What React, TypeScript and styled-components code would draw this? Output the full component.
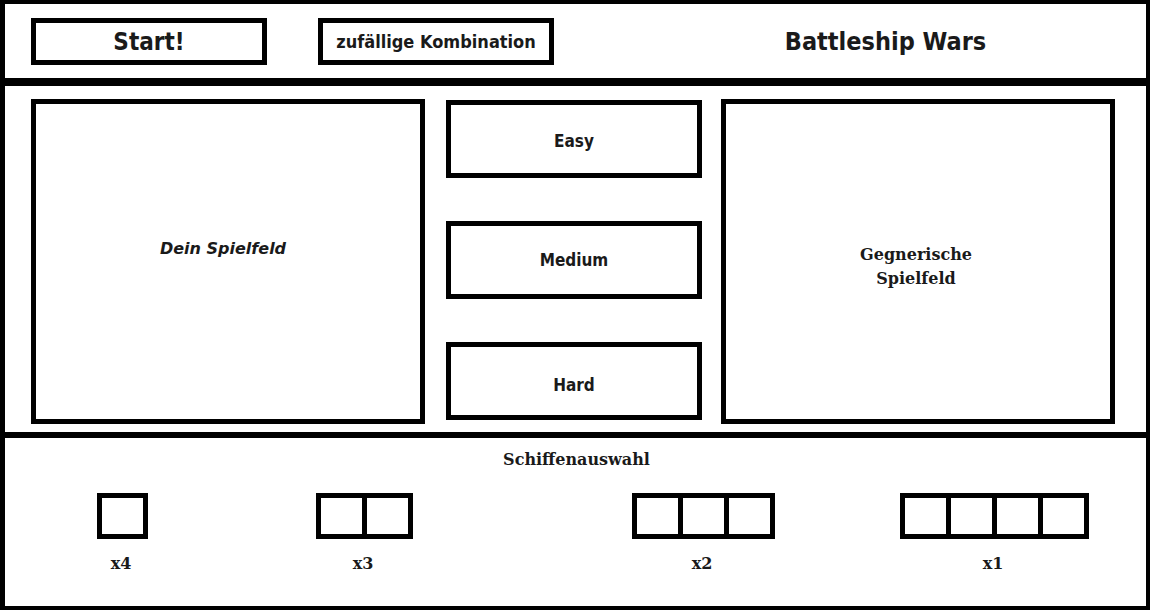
import React from "react";
import styled, { createGlobalStyle } from "styled-components";

const GlobalStyle = createGlobalStyle`
  html, body {
    margin: 0;
    padding: 0;
    background: #fff;
  }
  body {
    font-family: "DejaVu Serif", "Liberation Serif", serif;
    color: #1a1a1a;
  }
`;

const Frame = styled.div`
  width: 1150px;
  height: 610px;
  box-sizing: border-box;
  border: 4px solid #000;
  border-left-width: 5px;
  display: flex;
  flex-direction: column;
`;

const Header = styled.header`
  height: 82px;
  box-sizing: border-box;
  border-bottom: 8px solid #000;
  padding: 14px 0 13px 26px;
  display: flex;
  align-items: stretch;
  gap: 51px;
`;

const HeadButton = styled.button<{ $size: number }>`
  all: unset;
  box-sizing: border-box;
  width: 236px;
  height: 47px;
  border: 5px solid #000;
  display: flex;
  align-items: center;
  justify-content: center;
  font-family: "DejaVu Sans Condensed", "Liberation Sans", sans-serif;
  font-weight: 700;
  font-size: ${(p) => p.$size}px;
  color: #1a1a1a;
  cursor: pointer;
`;

const Title = styled.h1`
  flex: 1;
  margin: 0;
  padding-left: 20px;
  display: flex;
  align-items: center;
  justify-content: center;
  font-family: "DejaVu Sans Condensed", "Liberation Sans", sans-serif;
  font-weight: 700;
  font-size: 25px;
  color: #1a1a1a;
`;

const Main = styled.main`
  height: 346px;
  box-sizing: border-box;
  padding: 13px 31px 8px 26px;
  display: flex;
  gap: 21px;
`;

const Board = styled.div<{ $width: number }>`
  width: ${(p) => p.$width}px;
  height: 325px;
  box-sizing: border-box;
  border: 5px solid #000;
  display: flex;
  align-items: center;
  justify-content: center;
  text-align: center;
`;

const OwnLabel = styled.span`
  font-family: "DejaVu Sans", "Liberation Sans", sans-serif;
  font-style: italic;
  font-weight: 700;
  font-size: 16px;
  margin-top: -26px;
  margin-right: 10px;
`;

const EnemyLabel = styled.span`
  font-family: "DejaVu Serif", "Liberation Serif", serif;
  font-weight: 700;
  font-size: 16px;
  line-height: 24px;
  margin-top: 10px;
  margin-right: 4px;
`;

const Levels = styled.div`
  width: 256px;
  height: 320px;
  margin-top: 1px;
  margin-right: -2px;
  display: flex;
  flex-direction: column;
  justify-content: space-between;
`;

const LevelButton = styled.button<{ $shift: number }>`
  all: unset;
  box-sizing: border-box;
  height: 78px;
  border: 5px solid #000;
  display: flex;
  align-items: center;
  justify-content: center;
  font-family: "DejaVu Sans Condensed", "DejaVu Sans", sans-serif;
  font-weight: 700;
  font-size: 17px;
  color: #1a1a1a;
  padding-top: ${(p) => p.$shift}px;
  cursor: pointer;
`;

const Footer = styled.section`
  flex: 1;
  border-top: 6px solid #000;
  display: flex;
  flex-direction: column;
  align-items: stretch;
`;

const FooterTitle = styled.div`
  text-align: center;
  font-weight: 700;
  font-size: 16px;
  margin-top: 12px;
  margin-left: 2px;
`;

const ShipRow = styled.div`
  display: flex;
  align-items: flex-start;
  margin-top: 24px;
`;

const ShipGroup = styled.div<{ $offset: number }>`
  margin-left: ${(p) => p.$offset}px;
  display: flex;
  flex-direction: column;
  align-items: center;
  gap: 15px;
`;

const Ship = styled.div`
  display: flex;
  border: 5px solid #000;
`;

const Cell = styled.div`
  width: 41px;
  height: 36px;
  & + & {
    border-left: 5px solid #000;
  }
`;

const Count = styled.div`
  font-weight: 700;
  font-size: 16px;
  line-height: 20px;
  margin-left: -3px;
`;

const ships = [
  { cells: 1, count: 4, offset: 92 },
  { cells: 2, count: 3, offset: 168 },
  { cells: 3, count: 2, offset: 219 },
  { cells: 4, count: 1, offset: 125 },
];

export default function App() {
  return (
    <>
      <GlobalStyle />
      <Frame>
        <Header>
          <HeadButton $size={24}>Start!</HeadButton>
          <HeadButton $size={18}>zufällige Kombination</HeadButton>
          <Title>Battleship Wars</Title>
        </Header>
        <Main>
          <Board $width={394}>
            <OwnLabel>Dein Spielfeld</OwnLabel>
          </Board>
          <Levels>
            <LevelButton $shift={4}>Easy</LevelButton>
            <LevelButton $shift={0}>Medium</LevelButton>
            <LevelButton $shift={8}>Hard</LevelButton>
          </Levels>
          <Board $width={394}>
            <EnemyLabel>
              Gegnerische
              <br />
              Spielfeld
            </EnemyLabel>
          </Board>
        </Main>
        <Footer>
          <FooterTitle>Schiffenauswahl</FooterTitle>
          <ShipRow>
            {ships.map((s) => (
              <ShipGroup key={s.count} $offset={s.offset}>
                <Ship>
                  {Array.from({ length: s.cells }).map((_, i) => (
                    <Cell key={i} />
                  ))}
                </Ship>
                <Count>x{s.count}</Count>
              </ShipGroup>
            ))}
          </ShipRow>
        </Footer>
      </Frame>
    </>
  );
}
